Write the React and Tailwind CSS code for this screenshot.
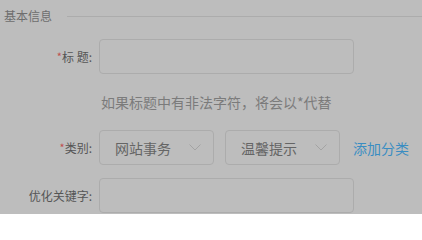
import React from "react";

const font = { fontFamily: '"Noto Sans CJK SC", "Noto Sans", sans-serif' };

function Chevron() {
  return (
    <svg width="12" height="7" viewBox="0 0 12 7" className="shrink-0">
      <path d="M0.5 0.5 L6 6 L11.5 0.5" fill="none" stroke="#a3a3a3" strokeWidth="1" />
    </svg>
  );
}

function Select({ text }) {
  return (
    <div className="w-[115px] h-[35px] border border-[#acacac] rounded-[4px] flex items-center justify-between pl-[15px] pr-[12px]">
      <span className="text-[14px] text-[#656565] leading-none">{text}</span>
      <Chevron />
    </div>
  );
}

function Label({ children, star }) {
  return (
    <div className="w-[92px] text-right text-[12px] leading-none text-[#555555] shrink-0">
      {star && <span className="text-[#c0504d] text-[11px] align-top">*</span>}
      {children}
    </div>
  );
}

export default function App() {
  return (
    <div className="w-[422px] h-[214px] bg-[#bdbdbd] overflow-hidden" style={font}>
      <div className="pt-[9px] flex items-center">
        <span className="pl-[4px] text-[12px] leading-[14px] text-[#6e6e6e]">基本信息</span>
        <div className="flex-1 ml-[15px] h-px bg-[#acacac]"></div>
      </div>

      <div className="mt-[16px] flex items-center">
        <Label star>标 题:</Label>
        <div className="ml-[7px] w-[255px] h-[35px] border border-[#acacac] rounded-[4px]"></div>
      </div>

      <div className="mt-[18px] pl-[101px] text-[14px] leading-[20px] text-[#7b7b7b]">
        如果标题中有非法字符，将会以*代替
      </div>

      <div className="mt-[18px] flex items-center">
        <Label star>类别:</Label>
        <div className="ml-[7px] flex items-center gap-[11px]">
          <Select text="网站事务" />
          <Select text="温馨提示" />
        </div>
        <span className="ml-[13px] text-[14px] text-[#3a8dc2] leading-none">添加分类</span>
      </div>

      <div className="mt-[13px] flex items-center">
        <Label>优化关键字:</Label>
        <div className="ml-[7px] w-[255px] h-[35px] border border-[#acacac] rounded-[4px]"></div>
      </div>
    </div>
  );
}
